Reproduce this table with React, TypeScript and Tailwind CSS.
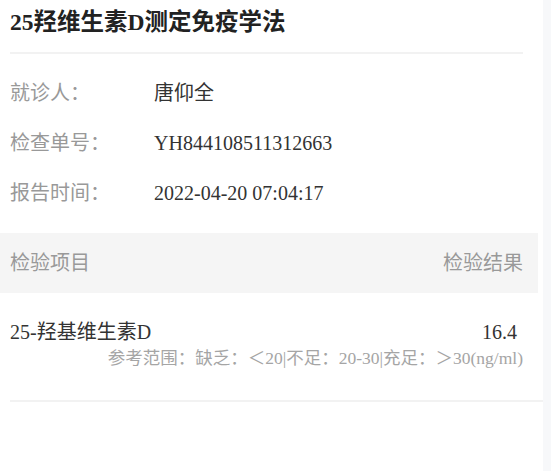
export default function App() {
  const info = [
    { label: "就诊人：", value: "唐仰全" },
    { label: "检查单号：", value: "YH844108511312663" },
    { label: "报告时间：", value: "2022-04-20 07:04:17" },
  ]

  return (
    <div
      className="flex h-[471px] w-full bg-[#f7f8fa]"
      style={{ fontFamily: '"Liberation Serif", "Noto Sans CJK SC", serif' }}
    >
      <div className="w-[543px] bg-white">
        <div className="pl-[10px] pr-[20px]">
          <h1 className="flex h-[52px] items-center pb-[6px] text-[23.5px] font-bold text-[#222]">
            25羟维生素D测定免疫学法
          </h1>
          <div className="h-[2px] bg-[#f2f2f2]" />
          <div className="pt-[14px] pb-[15px]">
            {info.map((row) => (
              <div key={row.label} className="flex h-[50px] items-center text-[20px]">
                <span className="w-[144px] shrink-0 text-[#999]">{row.label}</span>
                <span className="text-[#333]">{row.value}</span>
              </div>
            ))}
          </div>
        </div>

        {/* Table header */}
        <div className="mr-[5px] flex h-[60px] items-center justify-between bg-[#f5f5f5] pl-[10px] pr-[15px] text-[20px] text-[#999]">
          <span>检验项目</span>
          <span>检验结果</span>
        </div>

        {/* Result row */}
        <div className="pl-[10px] pr-[20px] pt-[26px]">
          <div className="flex items-center justify-between text-[20px] leading-[26px] text-[#333]">
            <span>25-羟基维生素D</span>
            <span className="pr-[6px]">16.4</span>
          </div>
          <div className="mt-[2px] text-right text-[17.5px] leading-[22px] text-[#a5a5a5]">
            参考范围：缺乏：＜20|不足：20-30|充足：＞30(ng/ml)
          </div>
        </div>
        <div className="ml-[10px] mt-[31px] h-[2px] bg-[#f2f2f2]" />
      </div>
    </div>
  )
}
